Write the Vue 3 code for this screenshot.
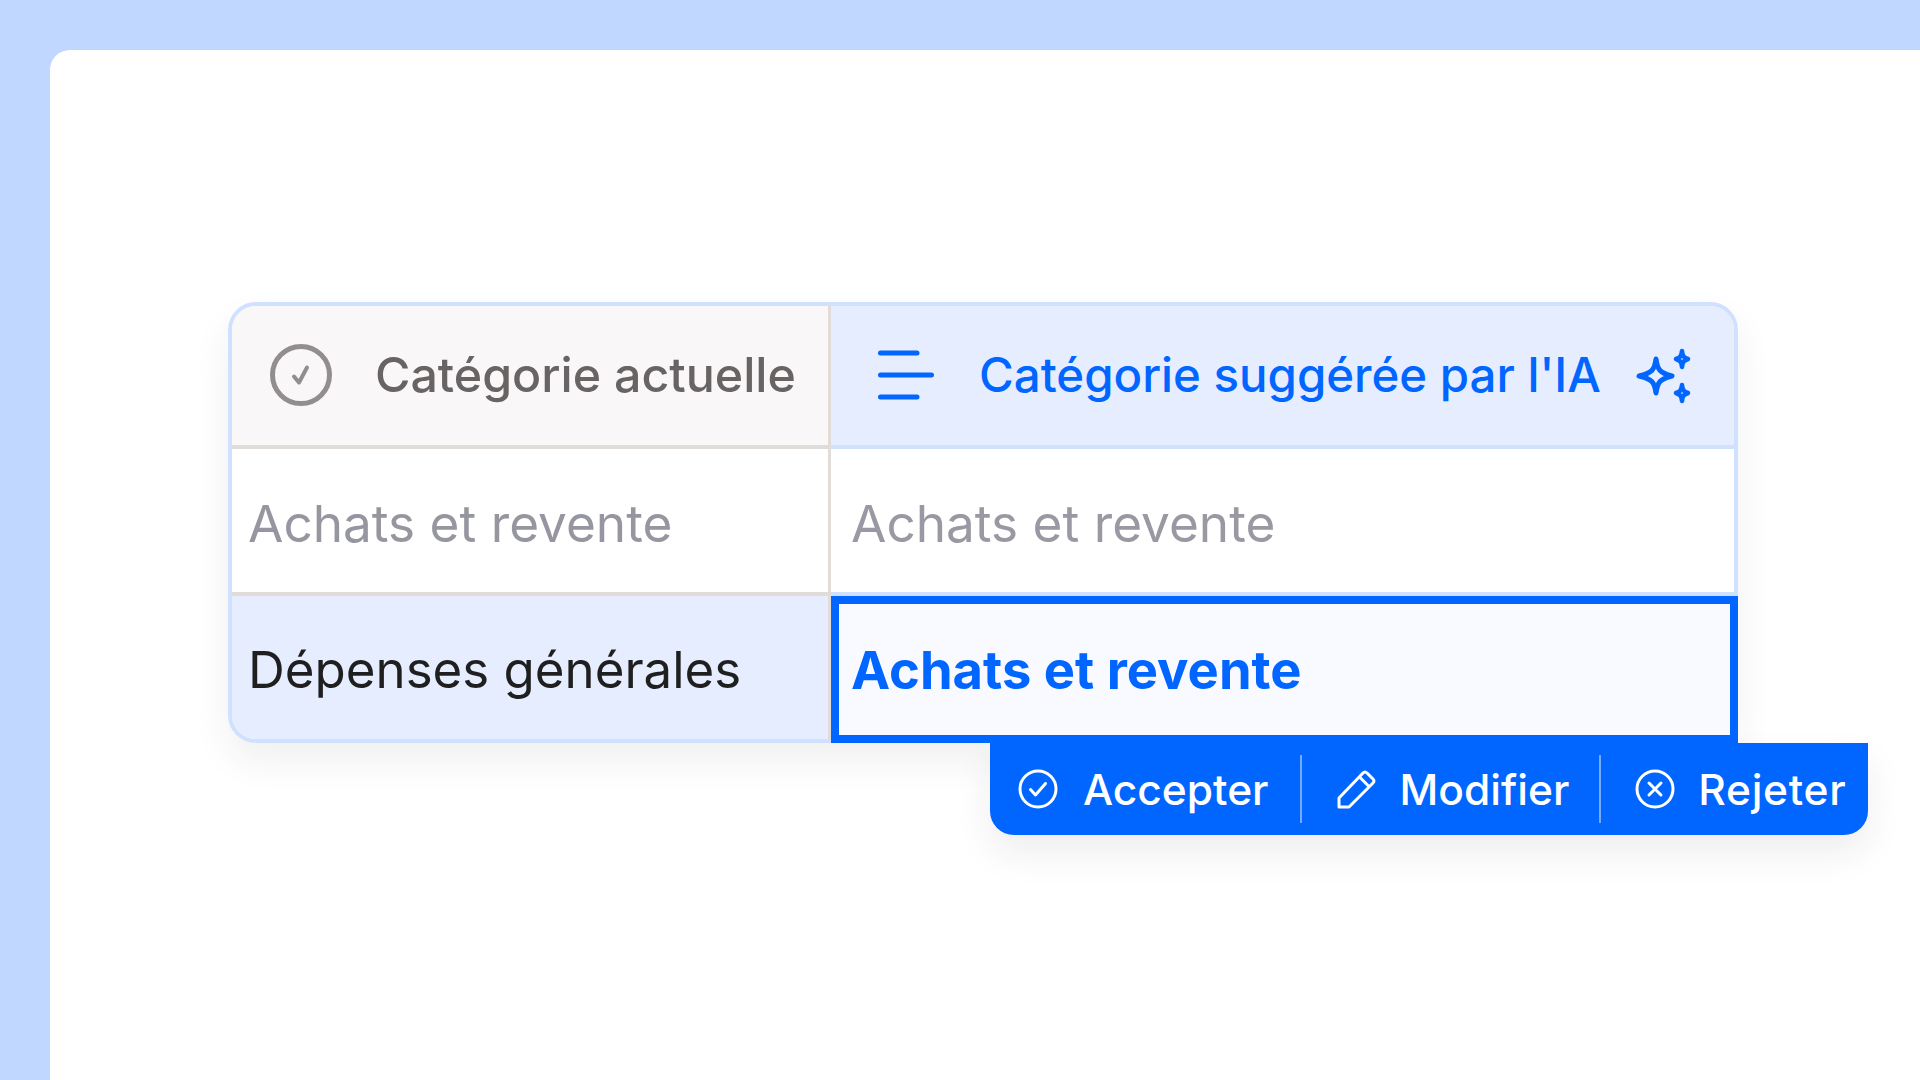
<script setup>
const rows = [
  { current: 'Achats et revente', suggested: 'Achats et revente', pending: false },
  { current: 'Dépenses générales', suggested: 'Achats et revente', pending: true }
]
</script>

<template>
  <div class="page">
    <div class="panel">
      <div class="table">
        <div class="cell head head-current">
          <svg class="head-icon" width="62" height="62" viewBox="0 0 62 62" fill="none">
            <circle cx="31" cy="31" r="28.5" stroke="#928e8e" stroke-width="5" />
            <path d="M24 32.5 L29 38.5 L37 23.5" stroke="#928e8e" stroke-width="4" stroke-linecap="round" stroke-linejoin="round" />
          </svg>
          <span>Catégorie actuelle</span>
        </div>
        <div class="cell head head-suggested">
          <svg class="lines" width="56" height="50" viewBox="0 0 56 50" fill="none">
            <path d="M2.5 3 H39 M2.5 25 H53.5 M2.5 47 H39" stroke="#0066ff" stroke-width="5" stroke-linecap="round" />
          </svg>
          <span class="head-label">Catégorie suggérée par l'IA</span>
          <svg class="sparks" width="58" height="58" viewBox="0 0 58 58" fill="none">
            <path d="M22 12 C23.5 23 26 26 38 29 C26 32 23.5 35 22 46 C20.5 35 18 32 5 29 C18 26 20.5 23 22 12 Z" stroke="#0066ff" stroke-width="5" stroke-linejoin="round" />
            <path d="M48 4 C48.6 9 49.5 10.5 54 12 C49.5 13.5 48.6 15 48 20 C47.4 15 46.5 13.5 42 12 C46.5 10.5 47.4 9 48 4 Z" stroke="#0066ff" stroke-width="4.5" stroke-linejoin="round" />
            <path d="M48 38 C48.6 43 49.5 44.5 54 46 C49.5 47.5 48.6 49 48 54 C47.4 49 46.5 47.5 42 46 C46.5 44.5 47.4 43 48 38 Z" stroke="#0066ff" stroke-width="4.5" stroke-linejoin="round" />
          </svg>
        </div>
        <template v-for="(row, i) in rows" :key="i">
          <div :class="['cell', 'body', 'left', { 'left-pending': row.pending }]">{{ row.current }}</div>
          <div :class="['cell', 'body', 'right', { 'right-pending': row.pending }]">{{ row.suggested }}</div>
        </template>
      </div>

      <div class="toolbar">
        <button class="action action-accept">
          <svg width="40" height="40" viewBox="0 0 40 40" fill="none">
            <circle cx="20" cy="20" r="18" stroke="#fff" stroke-width="3" />
            <path d="M12.5 20.5 L17.5 26 L27.5 14.5" stroke="#fff" stroke-width="3" stroke-linecap="round" stroke-linejoin="round" />
          </svg>
          <span>Accepter</span>
        </button>
        <span class="sep"></span>
        <button class="action action-edit">
          <svg width="40" height="40" viewBox="0 0 40 40" fill="none">
            <path d="M2 38 V29 L26 4 Q28 2 30 4 L36 10 Q38 12 36 14 L12 38 Z" stroke="#fff" stroke-width="3" stroke-linejoin="round" />
            <path d="M22.5 8 L32 17.5" stroke="#fff" stroke-width="3" />
          </svg>
          <span>Modifier</span>
        </button>
        <span class="sep"></span>
        <button class="action action-reject">
          <svg width="40" height="40" viewBox="0 0 40 40" fill="none">
            <circle cx="20" cy="20" r="18" stroke="#fff" stroke-width="3" />
            <path d="M14 14 L26 26 M26 14 L14 26" stroke="#fff" stroke-width="3" stroke-linecap="round" />
          </svg>
          <span>Rejeter</span>
        </button>
      </div>
    </div>
  </div>
</template>

<style scoped>
.page {
  width: 1920px;
  height: 1080px;
  background: #c0d7ff;
  padding: 50px 0 0 50px;
  box-sizing: border-box;
  overflow: hidden;
  font-family: Inter, "Liberation Sans", sans-serif;
}

.panel {
  height: 1030px;
  background: #fff;
  border-top-left-radius: 20px;
  padding: 252px 0 0 178px;
  box-sizing: border-box;
}

.table {
  width: 1510px;
  height: 441px;
  box-sizing: border-box;
  display: grid;
  grid-template-columns: 599px 1fr;
  grid-template-rows: 143px 147px 143px;
  border: 4px solid #d0e0ff;
  border-radius: 28px;
  background: #fff;
  box-shadow: 0 18px 36px rgba(40, 40, 60, 0.07);
}

.cell {
  display: flex;
  align-items: center;
  box-sizing: border-box;
}

.head {
  font-weight: 500;
  padding-bottom: 2px;
}

.head-current {
  background: #faf7f8;
  color: #696464;
  font-size: 48.3px;
  border-right: 3px solid #e2dcd9;
  border-bottom: 4px solid #e2dcd9;
  border-top-left-radius: 24px;
  padding-left: 38px;
  gap: 43px;
}

.head-suggested {
  background: #e5edfe;
  color: #0066ff;
  font-size: 47.4px;
  border-bottom: 4px solid #d0e0ff;
  border-top-right-radius: 24px;
  padding-left: 47px;
}

.head-label {
  margin-left: 45px;
}

.sparks {
  margin: 2px 0 0 33px;
}

.body {
  font-size: 51.3px;
  padding-top: 4px;
}

.left {
  padding-left: 16px;
  border-right: 3px solid #e2dcd9;
  color: #9696a0;
  border-bottom: 4px solid #e2dcd9;
}

.right {
  padding-left: 20px;
  color: #9a98a2;
  border-bottom: 4px solid #d0e0ff;
}

.left-pending {
  background: #e5edff;
  color: #1f1f1f;
  font-size: 51px;
  border-bottom: 0;
  border-bottom-left-radius: 24px;
}

.right-pending {
  position: relative;
  z-index: 1;
  margin: 0 -4px -4px 0;
  background: #f9faff;
  color: #0066ff;
  font-size: 52.5px;
  font-weight: 700;
  border: 8px solid #0066ff;
  padding: 0 0 0 12px;
}

.toolbar {
  display: flex;
  align-items: center;
  width: 878px;
  height: 92px;
  margin: 0 0 0 762px;
  background: #0066ff;
  border-radius: 0 0 24px 24px;
  box-shadow: 0 18px 36px rgba(40, 40, 60, 0.08);
  box-sizing: border-box;
}

.action {
  display: flex;
  align-items: center;
  gap: 25px;
  padding: 0;
  border: 0;
  background: none;
  color: #fff;
  font: 500 42.5px Inter, "Liberation Sans", sans-serif;
}

.action-accept {
  margin: 0 31px 0 28px;
}

.action-edit {
  gap: 23px;
  margin: 0 30px 0 35px;
}

.action-reject {
  gap: 23px;
  letter-spacing: 0.7px;
  margin-left: 34px;
}

.sep {
  width: 2px;
  height: 68px;
  background: rgba(255, 255, 255, 0.45);
}
</style>
